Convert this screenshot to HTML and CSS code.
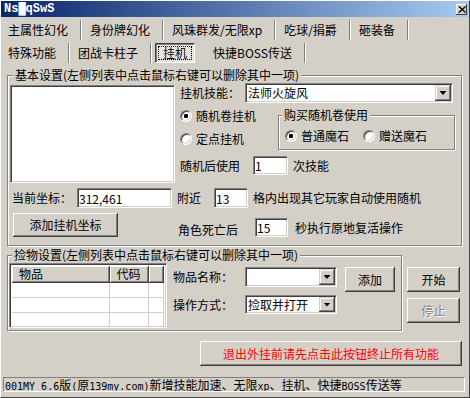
FILE: index.html
```html
<!DOCTYPE html>
<html lang="zh-CN">

<head>
    <meta charset="UTF-8">
    <title>Ns█qSwS</title>
    <link rel="stylesheet" href="styles.css">
</head>

<body>
    <div class="window">
        <div class="titlebar">
            <span class="title">Ns█qSwS</span>
            <span class="close">
                <svg width="8" height="7" viewBox="0 0 8 7">
                    <path d="M0.5 0.5 L7 6.5 M1.5 0.5 L8 6.5 M7 0.5 L0.5 6.5 M8 0.5 L1.5 6.5" stroke="#000" stroke-width="1" />
                </svg>
            </span>
        </div>
        <div class="client">
            <div class="tabs">
                <div class="tab-row">
                    <span class="tab">主属性幻化</span>
                    <span class="tab">身份牌幻化</span>
                    <span class="tab">风珠群发/无限xp</span>
                    <span class="tab">吃球/捐爵</span>
                    <span class="tab">砸装备</span>
                </div>
                <div class="tab-row">
                    <span class="tab">特殊功能</span>
                    <span class="tab">团战卡柱子</span>
                    <span class="tab active">挂机</span>
                    <span class="tab">快捷BOSS传送</span>
                </div>
            </div>

            <!-- 基本设置 -->
            <fieldset class="group basic">
                <legend>基本设置(左侧列表中点击鼠标右键可以删除其中一项)</legend>
                <div class="basic-top">
                    <div class="listbox"></div>
                    <div class="basic-right">
                        <div class="line skill">
                            <span class="lbl">挂机技能：</span>
                            <div class="combo skill-combo"><span class="val">法师火旋风</span><span class="arrow"></span></div>
                        </div>
                        <div class="mode">
                            <div class="radios">
                                <label class="radio"><input type="radio" name="mode" checked>随机卷挂机</label>
                                <label class="radio"><input type="radio" name="mode">定点挂机</label>
                            </div>
                            <fieldset class="group buy">
                                <legend>购买随机卷使用</legend>
                                <div class="buy-items">
                                    <label class="radio"><input type="radio" name="stone" checked>普通魔石</label>
                                    <label class="radio"><input type="radio" name="stone">赠送魔石</label>
                                </div>
                            </fieldset>
                        </div>
                        <div class="line use">
                            <span>随机后使用</span>
                            <input class="edit use-edit" type="text" value="1">
                            <span class="after">次技能</span>
                        </div>
                    </div>
                </div>
                <div class="line coord">
                    <span>当前坐标：</span>
                    <input class="edit coord-edit" type="text" value="312,461">
                    <span class="near">附近</span>
                    <input class="edit near-edit" type="text" value="13">
                    <span class="after">格内出现其它玩家自动使用随机</span>
                </div>
                <div class="line revive">
                    <button class="btn add-coord">添加挂机坐标</button>
                    <span class="dead">角色死亡后</span>
                    <div class="revive-set">
                        <input class="edit dead-edit" type="text" value="15">
                        <span class="dead-after">秒执行原地复活操作</span>
                    </div>
                </div>
            </fieldset>

            <!-- 捡物设置 -->
            <div class="pick-row">
                <fieldset class="group pick">
                    <legend>捡物设置(左侧列表中点击鼠标右键可以删除其中一项)</legend>
                    <div class="pick-body">
                        <div class="listview">
                            <div class="lv-head">
                                <span class="col-name">物品</span>
                                <span class="col-code">代码</span>
                                <span class="col-rest"></span>
                            </div>
                            <div class="lv-row"><span class="col-name"></span><span class="col-code"></span><span class="col-rest"></span></div>
                            <div class="lv-row"><span class="col-name"></span><span class="col-code"></span><span class="col-rest"></span></div>
                            <div class="lv-row"><span class="col-name"></span><span class="col-code"></span><span class="col-rest"></span></div>
                        </div>
                        <div class="pick-form">
                            <div class="pick-line first">
                                <span class="lbl">物品名称：</span>
                                <div class="combo item-combo"><span class="val"></span><span class="arrow"></span></div>
                                <button class="btn add-item">添加</button>
                            </div>
                            <div class="pick-line second">
                                <span class="lbl">操作方式：</span>
                                <div class="combo op-combo"><span class="val">捡取并打开</span><span class="arrow"></span></div>
                            </div>
                        </div>
                    </div>
                </fieldset>
                <div class="side-buttons">
                    <button class="btn start">开始</button>
                    <button class="btn stop" disabled>停止</button>
                </div>
            </div>

            <div class="quit-row">
                <button class="btn quit">退出外挂前请先点击此按钮终止所有功能</button>
            </div>

            <div class="status"><span class="en">001MY 6.6</span>版<span class="en">(</span>原<span class="en">139my.com)</span>新增技能加速、无限<span class="en">xp</span>、挂机、快捷<span class="en">BOSS</span>传送等</div>
        </div>
    </div>
</body>

</html>
```

FILE: styles.css
```css
* {
    box-sizing: border-box;
    margin: 0;
    padding: 0;
}

body {
    font: 12px/14px "Noto Sans CJK SC", sans-serif;
    color: #000;
    background: #d4d0c8;
}

.window {
    width: 470px;
    height: 398px;
    background: #d4d0c8;
    border: 1px solid;
    border-color: #fff #404040 #404040 #fff;
}

/* 标题栏 */
.titlebar {
    display: flex;
    align-items: center;
    height: 16px;
    padding-left: 3px;
    background: linear-gradient(to right, #0a246a, #a6caf0);
}

.title {
    flex: 1;
    color: #fff;
    font: bold 12px/16px "Liberation Mono", "DejaVu Sans Mono", monospace;
}

.close {
    display: flex;
    align-items: center;
    justify-content: center;
    width: 11px;
    height: 11px;
    margin-right: 2px;
    background: #d4d0c8;
    box-shadow: inset -1px -1px #404040, inset 1px 1px #fff;
}

.client {
    padding: 0 3px 0 2px;
}

/* 选项卡 */
.tabs {
    margin-top: 1px;
}

.tab-row {
    display: flex;
    height: 23px;
}

.tab {
    height: 20px;
    margin-top: 2px;
    margin-right: 1px;
    padding: 0 12px 0 8px;
    line-height: 20px;
    white-space: nowrap;
    border-right: 1px solid #808080;
    box-shadow: 1px 0 0 #fff;
}

.tab:first-child {
    padding-left: 5px;
}

.tab.active {
    margin: 2px 10px 0 3px;
    padding: 0 7px;
    line-height: 18px;
    border: 1px solid;
    border-color: #404040 #fff #fff #404040;
    box-shadow: inset 1px 1px #808080;
    background-color: #fff;
    background-image: conic-gradient(#d4d0c8 25%, #fff 0 50%, #d4d0c8 0 75%, #fff 0);
    background-size: 2px 2px;
    outline: 1px dotted #000;
    outline-offset: -4px;
}

/* 分组框 */
.group {
    min-width: 0;
    border: 1px solid #808080;
    box-shadow: inset 1px 1px #fff, 1px 1px 0 #fff;
}

.group legend {
    margin-left: 3px;
    padding: 0 2px;
    line-height: 14px;
    background: #d4d0c8;
}

.basic {
    margin: 4px 4px 0 4px;
    padding: 1px 2px 8px 2px;
}

.basic-top {
    display: flex;
}

.listbox {
    width: 165px;
    height: 98px;
    margin-top: 2px;
    background: #fff;
    border: 1px solid;
    border-color: #808080 #fff #fff #808080;
    box-shadow: inset 1px 1px #404040, inset -1px -1px #d4d0c8;
}

.basic-right {
    margin-left: 5px;
}

.line {
    display: flex;
    align-items: center;
    white-space: nowrap;
}

.skill {
    height: 20px;
}

.combo {
    display: flex;
    background: #fff;
    border: 1px solid;
    border-color: #808080 #fff #fff #808080;
    box-shadow: inset 1px 1px #404040, inset -1px -1px #d4d0c8;
    padding: 1px;
}

.combo .val {
    flex: 1;
    padding-left: 1px;
    overflow: hidden;
    white-space: nowrap;
}

.combo .arrow {
    display: flex;
    align-items: center;
    justify-content: center;
    width: 16px;
    background: #d4d0c8;
    box-shadow: inset -1px -1px #404040, inset 1px 1px #d4d0c8, inset -2px -2px #808080, inset 2px 2px #fff;
}

.combo .arrow::after {
    content: "";
    width: 7px;
    height: 4px;
    background: #000;
    clip-path: polygon(0 0, 100% 0, 50% 100%);
}

.skill-combo {
    width: 208px;
    height: 20px;
    margin-left: 5px;
}

.skill-combo .val {
    line-height: 16px;
}

/* 单选 */
.radio {
    display: flex;
    align-items: center;
    white-space: nowrap;
}

.radio input {
    appearance: none;
    width: 12px;
    height: 12px;
    margin-right: 4px;
    border-radius: 50%;
    background: #fff;
    border: 1px solid;
    border-color: #808080 #fff #fff #808080;
    box-shadow: inset 1px 1px #404040, inset -1px -1px #d4d0c8;
}

.radio input:checked {
    background: radial-gradient(circle, #000 0 2px, #fff 2.5px);
}

.mode {
    display: flex;
    margin-top: 1px;
}

.radios {
    width: 98px;
}

.radios .radio {
    height: 23px;
}

.buy {
    width: 177px;
    margin-top: 4px;
    padding: 7px 0 6px 6px;
}

.buy legend {
    margin-left: -3px;
}

.buy-items {
    display: flex;
}

.buy-items .radio + .radio {
    margin-left: 14px;
}

/* 编辑框 */
.edit {
    height: 19px;
    padding: 0 1px;
    font: inherit;
    line-height: 15px;
    background: #fff;
    border: 1px solid;
    border-color: #808080 #fff #fff #808080;
    box-shadow: inset 1px 1px #404040, inset -1px -1px #d4d0c8;
    outline: none;
}

.use {
    margin-top: 6px;
}

.use-edit {
    width: 35px;
    margin-left: 13px;
}

.after {
    margin-left: 5px;
}

.coord {
    margin: 5px 0 0 2px;
}

.coord .edit {
    height: 20px;
}

.coord-edit {
    width: 95px;
    margin-left: 5px;
}

.near {
    margin-left: 5px;
}

.near-edit {
    width: 34px;
    margin-left: 13px;
}

.revive {
    align-items: flex-end;
    margin-top: 5px;
}

.dead {
    margin-left: 60px;
}

.revive-set {
    display: flex;
    align-items: center;
}

.dead-edit {
    width: 33px;
    margin-left: 17px;
}

.dead-after {
    margin-left: 7px;
}

/* 按钮 */
.btn {
    font: inherit;
    color: #000;
    background: #d4d0c8;
    border: none;
    box-shadow: inset -1px -1px #404040, inset 1px 1px #fff, inset -2px -2px #808080;
    white-space: nowrap;
}

.btn:disabled {
    color: #808080;
    text-shadow: 1px 1px 0 #fff;
}

.add-coord {
    width: 105px;
    height: 24px;
    margin-left: 3px;
}

/* 捡物设置 */
.pick-row {
    display: flex;
    margin-top: 2px;
}

.pick {
    width: 395px;
    margin-left: 4px;
    padding: 1px 0 2px 1px;
}

.pick-body {
    display: flex;
}

.listview {
    width: 158px;
    height: 65px;
    padding: 2px;
    background: #fff;
    border: 1px solid;
    border-color: #808080 #fff #fff #808080;
    box-shadow: inset 1px 1px #404040, inset -1px -1px #d4d0c8;
    overflow: hidden;
}

.lv-head,
.lv-row {
    display: flex;
}

.lv-head {
    height: 17px;
    line-height: 15px;
}

.lv-head span {
    background: #d4d0c8;
    box-shadow: inset -1px -1px #404040, inset 1px 1px #fff, inset -2px -2px #808080;
    padding-left: 7px;
}

.lv-row {
    height: 15px;
    border-bottom: 1px solid #d4d0c8;
}

.lv-row span {
    border-right: 1px solid #d4d0c8;
}

.col-name {
    width: 99px;
}

.col-code {
    width: 40px;
}

.col-rest {
    width: 15px;
}

.pick-form {
    margin-left: 6px;
    padding-top: 4px;
}

.pick-line {
    display: flex;
    align-items: flex-start;
    white-space: nowrap;
}

.pick-line.first .lbl {
    line-height: 20px;
}

.item-combo {
    width: 92px;
    height: 20px;
    margin-left: 12px;
}

.add-item {
    width: 50px;
    height: 25px;
    margin-left: 8px;
}

.pick-line.second {
    margin-top: 3px;
}

.pick-line.second .lbl {
    line-height: 19px;
}

.op-combo {
    width: 92px;
    height: 19px;
    margin-left: 12px;
}

.op-combo .val {
    line-height: 15px;
}

.side-buttons {
    display: flex;
    flex-direction: column;
    margin: 19px 0 0 5px;
}

.side-buttons .btn {
    width: 53px;
    height: 25px;
}

.side-buttons .stop {
    margin-top: 6px;
}

.quit-row {
    display: flex;
    justify-content: flex-end;
    margin: 10px 4px 0 0;
}

.quit {
    width: 262px;
    height: 25px;
    color: #ff0000;
}

/* 状态栏 */
.status {
    height: 15px;
    margin: 11px 1px 0 0;
    padding-left: 1px;
    line-height: 13px;
    white-space: nowrap;
    overflow: hidden;
    border: 1px solid;
    border-color: #808080 #fff #fff #808080;
}

.status .en {
    font-family: "DejaVu Sans Mono", monospace;
    font-size: 10px;
}
```
